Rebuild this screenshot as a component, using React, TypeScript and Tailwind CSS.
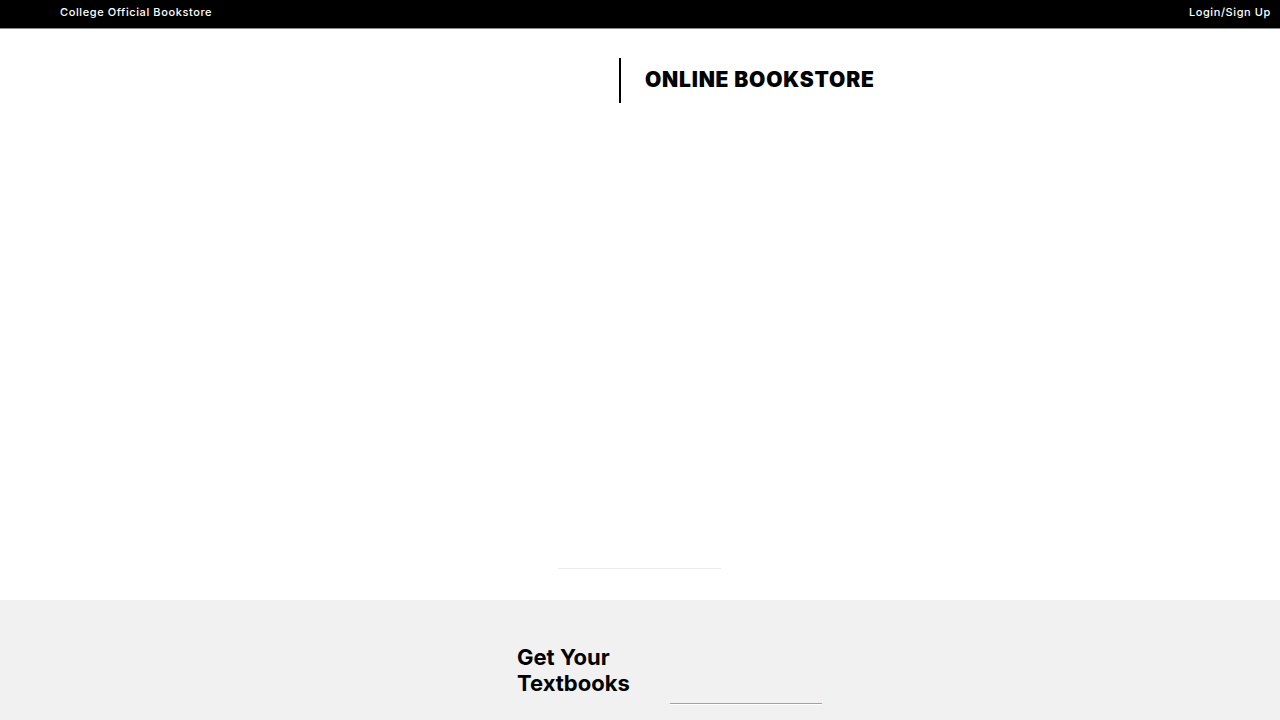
import React from "react";

export default function App() {
  return (
    <div className="min-h-[720px] w-full bg-white font-['Inter',sans-serif] text-black overflow-hidden">
      <header className="flex h-[29px] items-center justify-between border-b border-[#8a8a8a] bg-black pl-[60px] pr-[9px] text-[11px] font-medium tracking-[0.6px] text-white">
        <span className="pb-[4px]">College Official Bookstore</span>
        <span className="pb-[4px]">Login/Sign Up</span>
      </header>

      <section className="flex h-[571px] flex-col">
        <div className="mt-[29px] flex items-center pl-[619px]">
          <div className="h-[45px] w-[2px] bg-black" />
          <h1 className="ml-[24px] pb-[2px] text-[21px] font-black tracking-[0.8px] leading-none">ONLINE BOOKSTORE</h1>
        </div>
        <div className="mt-auto mb-[31px] ml-[558px] h-px w-[163px] bg-[#ececec]" />
      </section>

      <section className="flex h-[120px] bg-[#f1f1f1] pl-[517px] pt-[44px]">
        <h2 className="w-[140px] text-[22px] font-bold leading-[26px]">Get Your Textbooks</h2>
        <div className="ml-[13px] mt-[59px] h-[2px] w-[152px] border-b border-white bg-[#d88a93]" />
      </section>
    </div>
  );
}
